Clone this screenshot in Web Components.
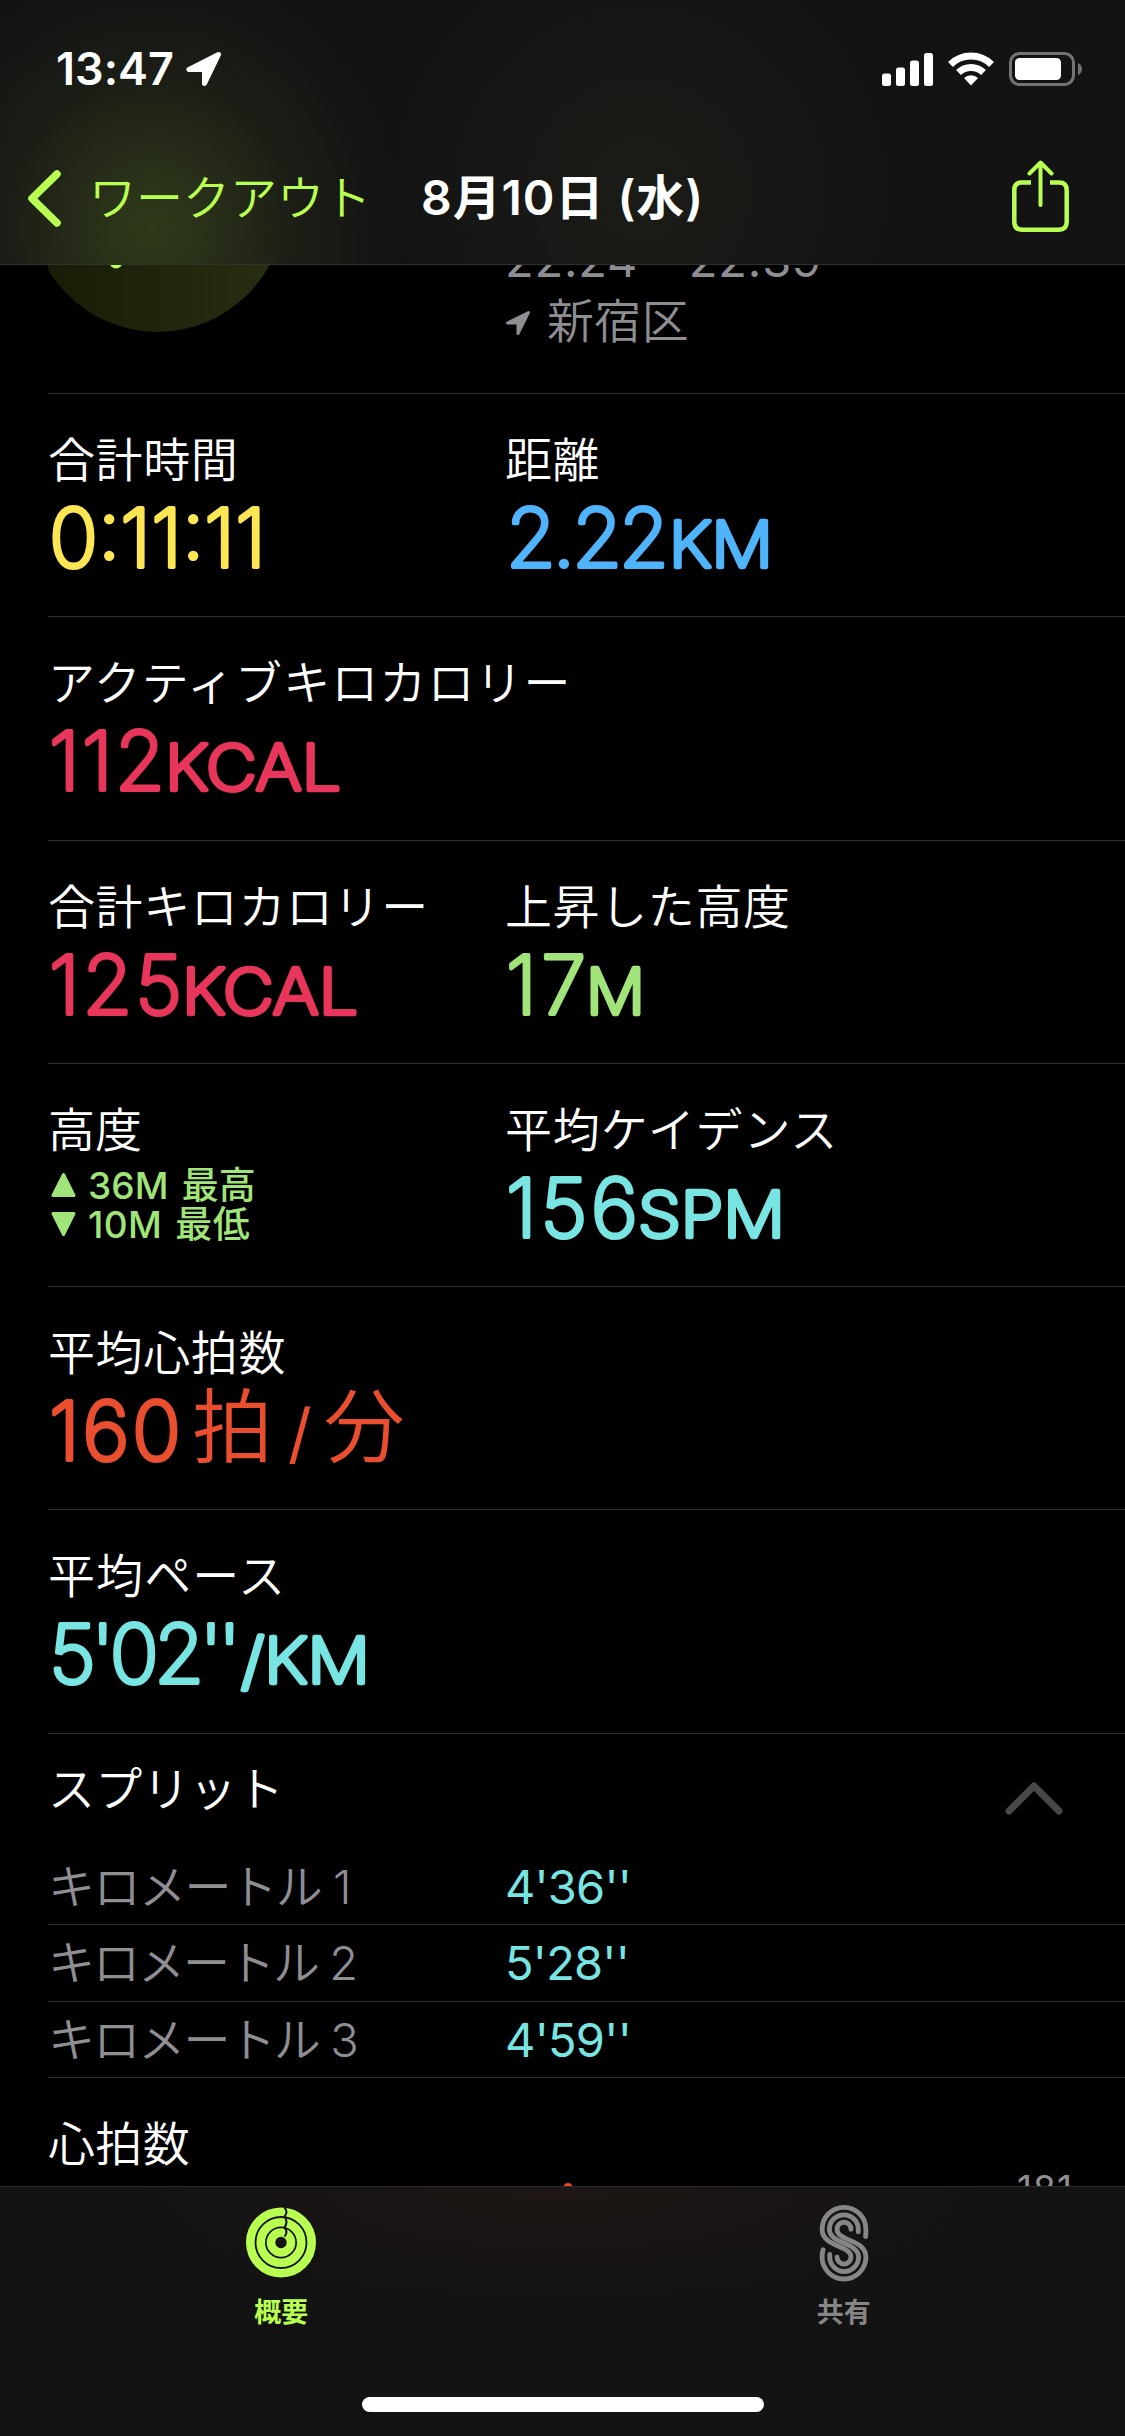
<!DOCTYPE html>
<html lang="ja">
<head>
<meta charset="utf-8">
<title>ワークアウト</title>
<style>
    body {
        margin: 0;
        width: 1125px;
        height: 2436px;
        overflow: hidden;
        background: #000;
        color: #fff;
        font-family: Inter, "Noto Sans CJK JP", sans-serif;
    }
</style>
</head>
<body>
<workout-app>
    <status-bar slot="top" time="13:47"></status-bar>
    <nav-bar slot="top" back="ワークアウト" back-width="282" heading="8月10日 (水)" heading-width="283"></nav-bar>

    <workout-summary time="22:24 - 22:39" place="新宿区"></workout-summary>

    <metric-row>
        <metric-item label="合計時間" value="0:11:11" width="217" color="#fce654"></metric-item>
        <metric-item label="距離" value="2.22" width="163" unit="KM" unit-width="104" color="#4fb4fb"></metric-item>
    </metric-row>
    <metric-row>
        <metric-item label="アクティブキロカロリー" value="112" width="116" unit="KCAL" unit-width="176" color="#e8365a"></metric-item>
    </metric-row>
    <metric-row>
        <metric-item label="合計キロカロリー" value="125" width="133" unit="KCAL" unit-width="176" color="#e8365a"></metric-item>
        <metric-item label="上昇した高度" value="17" width="80" unit="M" unit-width="59" color="#a1e57a"></metric-item>
    </metric-row>
    <metric-row>
        <elevation-item label="高度" high="36M 最高" low="10M 最低"></elevation-item>
        <metric-item label="平均ケイデンス" value="156" width="132" unit="SPM" unit-width="147" color="#78e5e2"></metric-item>
    </metric-row>
    <metric-row>
        <metric-item label="平均心拍数" value="160" width="132" kanji="拍/分" color="#e94e2f"></metric-item>
    </metric-row>
    <metric-row>
        <metric-item label="平均ペース" value="5'02''" width="192" unit="/KM" unit-width="129" color="#78e5e2"></metric-item>
    </metric-row>

    <split-list label="スプリット">
        <split-row name="キロメートル 1" name-width="302" pace="4'36''" pace-width="126"></split-row>
        <split-row name="キロメートル 2" name-width="308" pace="5'28''" pace-width="124"></split-row>
        <split-row name="キロメートル 3" name-width="309" pace="4'59''" pace-width="126"></split-row>
    </split-list>

    <heart-chart label="心拍数" max="181"></heart-chart>

    <tab-bar slot="bottom">
        <tab-item label="概要" icon="rings" active></tab-item>
        <tab-item label="共有" icon="sharing"></tab-item>
    </tab-bar>
</workout-app>

<script>
/*
Base class: opens a shadow root and fills it with the markup of the subclass
*/
class BaseElement extends HTMLElement {
    constructor() {
        super();
        this.shadow = this.attachShadow({ mode: "open" });
    }

    attr(name) {
        return this.getAttribute(name) || "";
    }

    connectedCallback() {
        this.shadow.innerHTML = this.render();
    }
}

/*
Text that is tracked in or out until it takes up the given width
*/
class FitText extends BaseElement {
    render() {
        return `<style>:host { display: inline-block; white-space: nowrap; flex: none; }</style><slot></slot>`;
    }

    connectedCallback() {
        super.connectedCallback();
        const width = Number(this.getAttribute("width"));
        if (!width) {
            return;
        }
        const natural = this.getBoundingClientRect().width;
        this.style.letterSpacing = (width - natural) / this.textContent.length + "px";
    }
}

/*
Big figures: thin text with a round-joined outline, which softens the corners
*/
class RoundText extends BaseElement {
    render() {
        const width = this.attr("width");
        const adjust = this.hasAttribute("stretch") ? "spacingAndGlyphs" : "spacing";
        return `
        <style>
            :host { display: block; flex: none; width: ${width}px; height: 90px; }
            svg { display: block; overflow: visible; }
            text { font-weight: 200; fill: currentColor; stroke: currentColor; stroke-width: ${this.attr("stroke")}; stroke-linejoin: round; }
        </style>
        <svg width="${width}" height="90"><text x="1" y="74.500" font-size="${this.attr("size")}" textLength="${width}" lengthAdjust="${adjust}">${this.attr("text")}</text></svg>`;
    }
}

class WorkoutApp extends BaseElement {
    render() {
        return `
        <style>
            :host { display: flex; flex-direction: column; width: 1125px; height: 2436px; }
            header {
                box-sizing: border-box;
                height: 265px;
                flex: none;
                border-bottom: 1px solid #30312b;
                background:
                    radial-gradient(ellipse 250px 260px at 152px 228px, #303a19 0%, rgba(44, 52, 26, .85) 25%, rgba(34, 38, 24, .5) 60%, rgba(20, 20, 19, 0) 100%),
                    radial-gradient(ellipse 260px 260px at 640px 190px, #1b1b17, rgba(20, 20, 19, 0)),
                    #131313;
            }
            main { flex: 1; min-height: 0; overflow: hidden; }
        </style>
        <header><slot name="top"></slot></header>
        <main><slot></slot></main>
        <slot name="bottom"></slot>`;
    }
}
customElements.define("workout-app", WorkoutApp);

class StatusBar extends BaseElement {
    render() {
        return `
        <style>
            :host { display: flex; align-items: center; height: 138px; padding: 0 43px 0 56px; box-sizing: border-box; }
            .time { font-size: 45px; font-weight: 600; line-height: 54px; }
            svg { display: block; flex: none; }
            .arrow { margin-left: 12px; }
            .signal { margin-left: auto; }
            .wifi { margin: 0 15px 0 15px; }
        </style>
        <fit-text class="time" width="118">${this.attr("time")}</fit-text>
        <svg class="arrow" width="36" height="36" viewBox="0 0 36 36" fill="#fff" stroke="#fff" stroke-width="5" stroke-linejoin="round">
            <path d="M32.5 3.500L3 18.500H18.500V32.500Z"/>
        </svg>
        <svg class="signal" width="51" height="33" viewBox="0 0 51 33" fill="#fff">
            <rect x="0" y="20.500" width="9" height="12.500" rx="2.500"/>
            <rect x="14" y="14.500" width="9" height="18.500" rx="2.500"/>
            <rect x="28" y="7.500" width="9" height="25.500" rx="2.500"/>
            <rect x="42" y="0" width="9" height="33" rx="2.500"/>
        </svg>
        <svg class="wifi" width="46" height="34" viewBox="0 0 46 34" fill="none" stroke="#fff" stroke-width="7">
            <path d="M2.500 12.500A29 29 0 0 1 43.500 12.500"/>
            <path d="M10.500 20.500A18 18 0 0 1 35.500 20.500"/>
            <path d="M23 33.500L16 26A10 10 0 0 1 30 26Z" fill="#fff" stroke="none"/>
        </svg>
        <svg width="73" height="34" viewBox="0 0 73 34">
            <rect x="1.500" y="1.500" width="63" height="31" rx="9" fill="none" stroke="#737373" stroke-width="3"/>
            <rect x="6" y="6" width="46" height="22" rx="4.500" fill="#fff"/>
            <path d="M69 11Q73 13 73 17Q73 21 69 23Z" fill="#737373"/>
        </svg>`;
    }
}

class NavBar extends BaseElement {
    render() {
        return `
        <style>
            :host { display: flex; align-items: center; height: 126px; padding: 0 56px 6px 28px; box-sizing: border-box; }
            svg { display: block; }
            .back { display: flex; align-items: center; gap: 28px; width: 393px; color: #b9ff52; font-size: 47px; font-weight: 350; line-height: 60px; }
            .heading { font-size: 48px; font-weight: 600; line-height: 60px; }
            .share { margin-left: auto; margin-top: -4px; }
        </style>
        <div class="back">
            <svg width="33" height="57" viewBox="0 0 33 57" fill="none" stroke="#b9ff52" stroke-width="7.500" stroke-linecap="round" stroke-linejoin="round">
                <path d="M29 4L4 28.500L29 53"/>
            </svg>
            <fit-text width="${this.attr("back-width")}">${this.attr("back")}</fit-text>
        </div>
        <fit-text class="heading" width="${this.attr("heading-width")}">${this.attr("heading")}</fit-text>
        <svg class="share" width="57" height="72" viewBox="0 0 57 72" fill="none" stroke="#b9ff52" stroke-width="4.500">
            <path d="M19 22.500H10Q2.300 22.500 2.300 30V62Q2.300 69.700 10 69.700H47Q54.700 69.700 54.700 62V30Q54.700 22.500 47 22.500H38"/>
            <path d="M28.500 45V3M17.500 13.500L28.500 2.500L39.500 13.500" stroke-width="4" stroke-linecap="round" stroke-linejoin="round"/>
        </svg>`;
    }
}

class WorkoutSummary extends BaseElement {
    render() {
        return `
        <style>
            :host { display: grid; grid-template-columns: 457px 1fr; height: 128px; margin-left: 48px; overflow: hidden; }
            svg { display: block; }
            .badge { margin-left: -20px; }
            .info { color: #8e8e93; font-size: 47px; font-weight: 400; line-height: 56px; margin-top: -33px; }
            .place { display: flex; align-items: center; gap: 16px; font-weight: 350; margin-top: 5px; }
            .place svg { margin-top: 3px; }
        </style>
        <svg class="badge" width="260" height="68" viewBox="0 0 260 68">
            <defs>
                <linearGradient id="disc" x1="0" x2="1">
                    <stop offset="0" stop-color="#191b04"/>
                    <stop offset="1" stop-color="#272f14"/>
                </linearGradient>
            </defs>
            <circle cx="129.500" cy="-60" r="127" fill="url(#disc)"/>
            <circle cx="88" cy="-3" r="6.500" fill="#b9ff52"/>
        </svg>
        <div class="info">
            <fit-text width="317">${this.attr("time")}</fit-text>
            <div class="place">
                <svg width="26" height="26" viewBox="0 0 26 26" fill="#8e8e93" stroke="#8e8e93" stroke-width="3" stroke-linejoin="round">
                    <path d="M23.500 2.500L2.500 13H13V23.500Z"/>
                </svg>
                <fit-text width="142">${this.attr("place")}</fit-text>
            </div>
        </div>`;
    }
}

class MetricRow extends BaseElement {
    render() {
        return `
        <style>
            :host {
                display: grid;
                grid-template-columns: 457px 1fr;
                box-sizing: border-box;
                height: 223.250px;
                margin-left: 48px;
                padding-top: 38px;
                border-top: 1px solid #303032;
            }
        </style>
        <slot></slot>`;
    }
}

class MetricItem extends BaseElement {
    render() {
        const kanji = this.attr("kanji").split("/");
        let unit = "";
        if (this.attr("unit")) {
            unit = `<round-text text="${this.attr("unit")}" width="${this.attr("unit-width")}" size="62.500" stroke="4.500" stretch></round-text>`;
        }
        if (kanji.length > 1) {
            unit = `<span class="kanji">${kanji[0]}</span><span class="slash">/</span><span class="kanji">${kanji[1]}</span>`;
        }
        return `
        <style>
            :host { display: block; white-space: nowrap; }
            .label { font-size: 47px; font-weight: 350; line-height: 56px; height: 56px; }
            .value { display: flex; color: ${this.attr("color")}; height: 90px; margin-top: 4px; }
            .kanji { font-size: 81px; font-weight: 350; line-height: 85px; }
            .kanji:first-of-type { margin-left: 12px; }
            .slash { font-size: 66px; font-weight: 400; line-height: 96px; margin: 0 12px 0 15px; }
        </style>
        <div class="label"><fit-text width="${this.attr("label").length * 47.6}">${this.attr("label")}</fit-text></div>
        <div class="value"><round-text text="${this.attr("value")}" width="${this.attr("width")}" size="81" stroke="4"></round-text>${unit}</div>`;
    }
}

class ElevationItem extends BaseElement {
    render() {
        return `
        <style>
            :host { display: block; color: #a1e57a; }
            .label { color: #fff; font-size: 47px; font-weight: 350; line-height: 56px; }
            .line { display: flex; align-items: center; gap: 12px; font-size: 37px; font-weight: 500; line-height: 39px; padding-left: 3px; word-spacing: 3px; }
            .label + .line { margin-top: 8px; }
            svg { display: block; }
        </style>
        <div class="label">${this.attr("label")}</div>
        <div class="line">
            <svg width="25" height="26" viewBox="0 0 25 26" fill="currentColor" stroke="currentColor" stroke-width="3" stroke-linejoin="round"><path d="M12.500 2.500L2 23.500H23Z"/></svg>
            <fit-text width="168">${this.attr("high")}</fit-text>
        </div>
        <div class="line">
            <svg width="25" height="26" viewBox="0 0 25 26" fill="currentColor" stroke="currentColor" stroke-width="3" stroke-linejoin="round"><path d="M12.500 23.500L2 2.500H23Z"/></svg>
            <fit-text width="162">${this.attr("low")}</fit-text>
        </div>`;
    }
}

class SplitList extends BaseElement {
    render() {
        return `
        <style>
            :host { display: block; margin-left: 48px; border-top: 1px solid #303032; }
            .head { display: flex; justify-content: space-between; height: 115px; padding: 27px 62px 0 0; box-sizing: border-box; font-size: 47px; font-weight: 350; line-height: 56px; }
            svg { display: block; margin-top: 20px; }
        </style>
        <div class="head">
            <fit-text width="236">${this.attr("label")}</fit-text>
            <svg width="58" height="34" viewBox="0 0 58 34" fill="none" stroke="#48484a" stroke-width="7" stroke-linecap="round" stroke-linejoin="round">
                <path d="M4 30L29 5L54 30"/>
            </svg>
        </div>
        <slot></slot>`;
    }
}

class SplitRow extends BaseElement {
    render() {
        return `
        <style>
            :host {
                display: grid;
                grid-template-columns: 457px 1fr;
                box-sizing: border-box;
                height: 76.500px;
                padding-top: 10px;
                border-bottom: 1px solid #303032;
                font-size: 47px;
                line-height: 56px;
            }
            .name { color: #8e8e93; font-weight: 350; }
            .pace { color: #78e5e2; }
        </style>
        <div class="name"><fit-text width="${this.attr("name-width")}">${this.attr("name")}</fit-text></div>
        <div class="pace"><fit-text width="${this.attr("pace-width")}">${this.attr("pace")}</fit-text></div>`;
    }
}

class HeartChart extends BaseElement {
    render() {
        return `
        <style>
            :host { display: block; margin-left: 48px; }
            .label { font-size: 47px; font-weight: 350; line-height: 56px; padding-top: 38px; }
            .plot { display: flex; align-items: flex-start; height: 60px; padding-right: 52px; color: #8e8e93; font-size: 37px; line-height: 44px; }
            svg { display: block; margin: 11px auto 0 514px; }
            .max { margin-top: -5px; }
        </style>
        <div class="label"><fit-text width="142">${this.attr("label")}</fit-text></div>
        <div class="plot">
            <svg width="12" height="30" viewBox="0 0 12 30"><rect x="1.500" width="9" height="30" rx="4.500" fill="#e94e2f"/></svg>
            <fit-text class="max" width="56">${this.attr("max")}</fit-text>
        </div>`;
    }
}

class TabBar extends BaseElement {
    render() {
        return `
        <style>
            :host {
                display: flex;
                flex-direction: column;
                box-sizing: border-box;
                flex: none;
                height: 250px;
                border-top: 1px solid #2a2a2a;
                background: radial-gradient(ellipse 420px 110px at 560px 0, #1d1614, rgba(20, 20, 20, 0)), #141313;
            }
            .tabs { display: flex; height: 209px; }
            .home { width: 402px; height: 15px; border-radius: 8px; background: #fff; margin: 1px auto 0; }
        </style>
        <div class="tabs"><slot></slot></div>
        <div class="home"></div>`;
    }
}

class TabItem extends BaseElement {
    get icon() {
        if (this.attr("icon") === "rings") {
            // three closed rings, the dark arcs are the caps of the overlapping ends
            return `
            <svg width="70" height="78" viewBox="0 0 70 78" fill="none" stroke="#b9ff52" stroke-width="8.600">
                <circle cx="35" cy="38.500" r="30.700"/>
                <circle cx="35" cy="38.500" r="20.300"/>
                <circle cx="35" cy="38.500" r="10"/>
                <path d="M38.500 3.500Q42.500 8 38.500 12.500Q42.500 18 38.500 23.500Q42.500 28 38.500 32.500" stroke="#141313" stroke-width="2"/>
            </svg>`;
        }
        return `
        <svg width="50" height="78" viewBox="118 102 150 235" fill="none" stroke="#868686" stroke-width="14.500" stroke-linecap="round">
            <path d="M258 200Q259 190 259 178A66 66 0 0 0 127 178C127 232 214 225 214 262A21 21 0 0 1 172 262"/>
            <path d="M236 186V178A43.500 43.500 0 0 0 149 178C149 223 237 217 237 262A43.500 43.500 0 0 1 150 262V254"/>
            <path d="M214 178A21 21 0 0 0 172 178C172 215 259 208 259 262A66 66 0 0 1 127 262Q127 250 130 240"/>
        </svg>`;
    }

    render() {
        return `
        <style>
            :host { flex: 1; display: flex; flex-direction: column; align-items: center; padding-top: 17px; color: #868686; }
            :host([active]) { color: #b9ff52; }
            svg { display: block; }
            span { font-size: 27px; font-weight: 600; line-height: 36px; margin-top: 13px; }
        </style>
        ${this.icon}
        <span>${this.attr("label")}</span>`;
    }
}

customElements.define("status-bar", StatusBar);
customElements.define("nav-bar", NavBar);
customElements.define("workout-summary", WorkoutSummary);
customElements.define("metric-row", MetricRow);
customElements.define("metric-item", MetricItem);
customElements.define("elevation-item", ElevationItem);
customElements.define("split-list", SplitList);
customElements.define("split-row", SplitRow);
customElements.define("heart-chart", HeartChart);
customElements.define("tab-bar", TabBar);
customElements.define("tab-item", TabItem);
customElements.define("round-text", RoundText);
// last, so that the styles round each text are in place when it is measured
customElements.define("fit-text", FitText);
</script>
</body>
</html>
